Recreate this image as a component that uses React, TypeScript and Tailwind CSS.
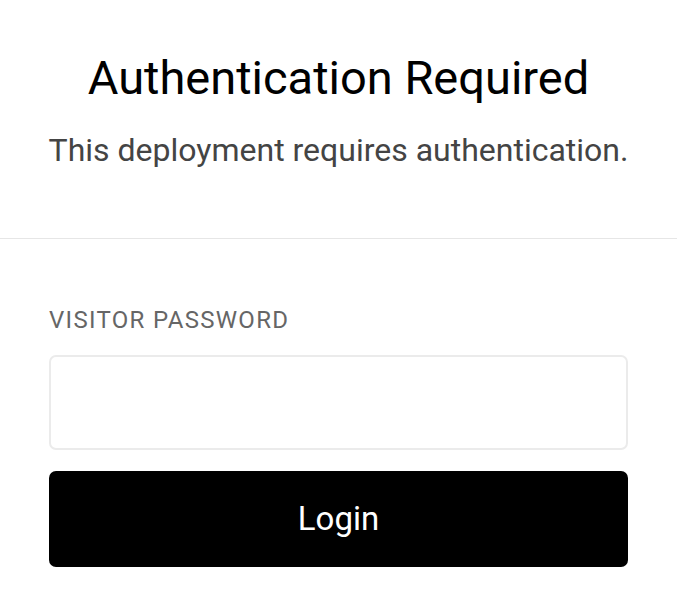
export default function App() {
  return (
    <div className="min-h-[613px] bg-white" style={{ fontFamily: "Roboto, 'Liberation Sans', sans-serif" }}>
      <div className="pt-[52px] pb-[69px] px-[40px] text-center">
        <h1 className="text-[47px] leading-[52px] text-black font-normal">Authentication Required</h1>
        <p className="mt-[27px] text-[32px] leading-[38px] text-[#444]">This deployment requires authentication.</p>
      </div>
      <div className="h-px bg-[#e6e6e6]" />
      <form className="px-[49px] pt-[68px]">
        <label className="block text-[24px] leading-[26px] uppercase text-[#666] tracking-[1.3px]">Visitor Password</label>
        <input
          type="password"
          className="mt-[22px] block w-full h-[95px] rounded-[7px] border-2 border-[#ebebeb] outline-none"
        />
        <button
          type="button"
          className="mt-[21px] w-full h-[96px] rounded-[7px] bg-black text-white text-[33px]"
        >
          Login
        </button>
      </form>
    </div>
  );
}
